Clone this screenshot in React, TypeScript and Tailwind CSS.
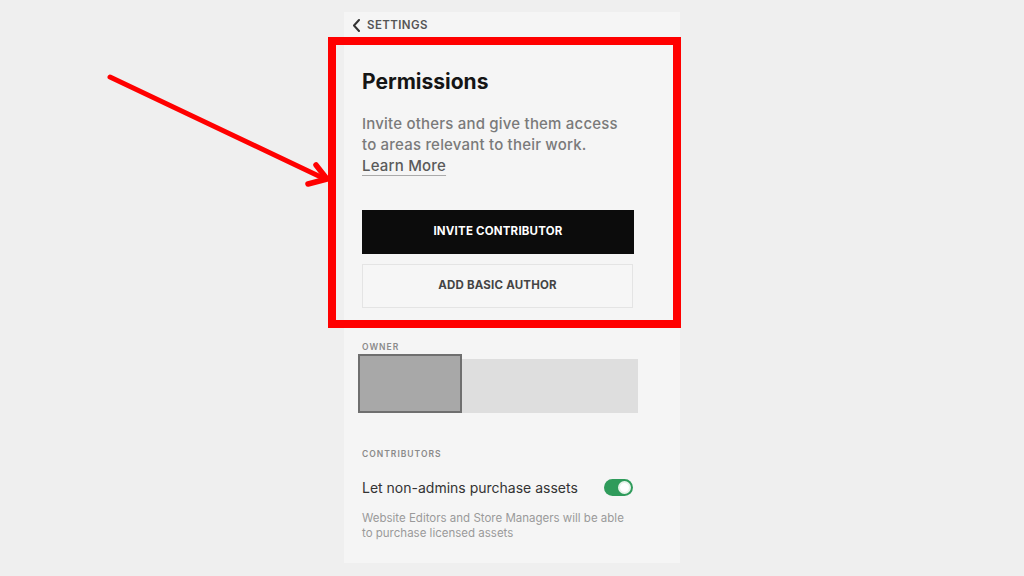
import React from "react";

function Toggle({ on }: { on: boolean }) {
  return (
    <div
      className={`flex h-[17px] w-[29px] items-center rounded-full px-[2px] ${
        on ? "justify-end bg-[#2f9b5b]" : "justify-start bg-[#c8c8c8]"
      }`}
    >
      <div className="h-[13px] w-[13px] rounded-full border-[2px] border-[#e7f3ea] bg-white" />
    </div>
  );
}

function Annotation() {
  return (
    <>
      <div className="absolute left-[328px] top-[37px] h-[291px] w-[353px] border-[8px] border-[#ff0000]" />
      <svg
        className="absolute left-0 top-0"
        width="1024"
        height="576"
        viewBox="0 0 1024 576"
        fill="none"
      >
        <path
          d="M110 77 L325 179"
          stroke="#ff0000"
          strokeWidth="5"
          strokeLinecap="round"
        />
        <path
          d="M316 165 L327 179 L308 184"
          stroke="#ff0000"
          strokeWidth="5.5"
          strokeLinecap="round"
          strokeLinejoin="round"
        />
      </svg>
    </>
  );
}

export default function App() {
  return (
    <div
      className="relative h-[576px] w-[1024px] overflow-hidden bg-[#efefef] pl-[344px] pt-[12px]"
      style={{ fontFamily: "Inter, 'Open Sans', sans-serif" }}
    >
      <div className="flex h-[551px] w-[336px] flex-col bg-[#f5f5f5]">
        {/* header */}
        <div className="flex h-[25px] items-center gap-[6px] pl-[8px] pt-[2px]">
          <svg width="9" height="13" viewBox="0 0 9 13" fill="none">
            <path
              d="M7 1 L2 6.5 L7 12"
              stroke="#333"
              strokeWidth="2"
              strokeLinecap="round"
              strokeLinejoin="round"
            />
          </svg>
          <span className="text-[11.5px] font-semibold tracking-[0.4px] text-[#555]">
            SETTINGS
          </span>
        </div>

        <div className="flex flex-col px-[18px]">
          <h1 className="mt-[33px] text-[21px] font-bold leading-[24px] text-[#151515]">
            Permissions
          </h1>
          <p className="mt-[19px] text-[15px] font-medium leading-[21px] tracking-[0.2px] text-[#7a7a7a]">
            Invite others and give them access
            <br />
            to areas relevant to their work.
            <br />
            <span className="text-[#5a5a5a] underline decoration-[#aaa] decoration-1 underline-offset-[4px]">
              Learn More
            </span>
          </p>

          <button className="mt-[34px] flex h-[44px] w-[272px] items-center justify-center bg-[#0c0c0c] text-[11.5px] font-bold tracking-[0.2px] text-white">
            INVITE CONTRIBUTOR
          </button>
          <button className="mt-[10px] flex h-[44px] w-[271px] items-center justify-center border border-[#e4e4e4] bg-[#f6f6f6] text-[11.5px] font-bold tracking-[0.2px] text-[#444]">
            ADD BASIC AUTHOR
          </button>

          <div className="mt-[33px] text-[8.5px] font-semibold leading-[12px] tracking-[1px] text-[#8a8a8a]">
            OWNER
          </div>
          <div className="ml-[-4px] mt-[1px] flex w-[280px] items-end">
            <div className="h-[59px] w-[104px] border-[2px] border-[#6f6f6f] bg-[#a8a8a8]" />
            <div className="h-[54px] flex-1 bg-[#dedede]" />
          </div>

          <div className="mt-[35px] text-[8.5px] font-semibold leading-[12px] tracking-[1px] text-[#8a8a8a]">
            CONTRIBUTORS
          </div>
          <div className="mt-[15px] flex h-[24px] w-[271px] items-center justify-between">
            <span className="text-[14px] text-[#333]">
              Let non-admins purchase assets
            </span>
            <Toggle on />
          </div>
          <p className="mt-[12px] text-[11.5px] leading-[15px] text-[#9a9a9a]">
            Website Editors and Store Managers will be able
            <br />
            to purchase licensed assets
          </p>
        </div>
      </div>

      <Annotation />
    </div>
  );
}
